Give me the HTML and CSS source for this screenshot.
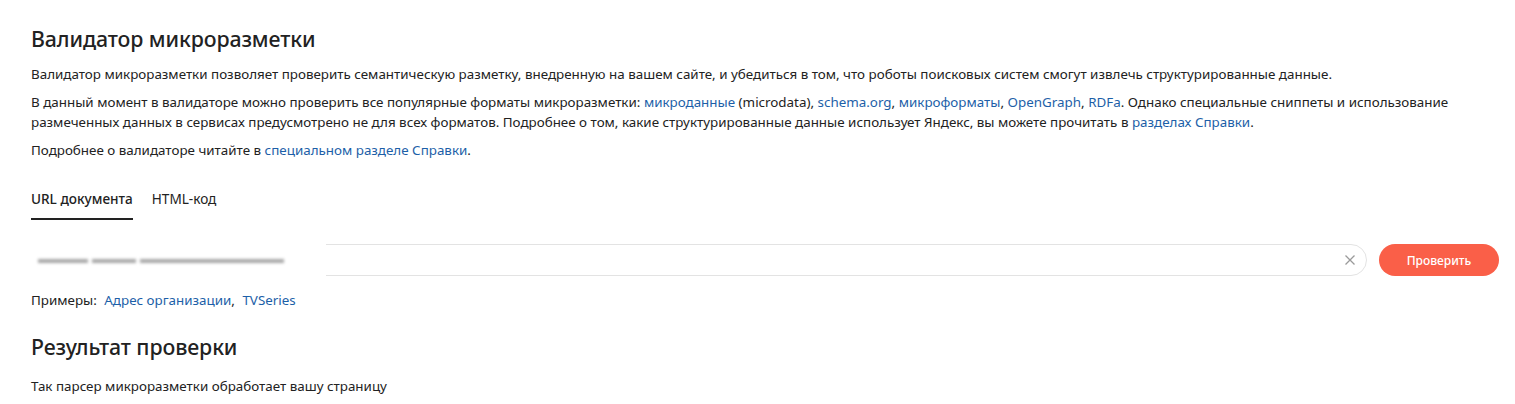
FILE: index.html
```html
<!DOCTYPE html>
<html lang="ru">
<head>
<meta charset="utf-8">
<link rel="stylesheet" href="styles.css">
</head>
<body>
<main class="page">
  <h1 class="title">Валидатор микроразметки</h1>
  <p class="text">Валидатор микроразметки позволяет проверить семантическую разметку, внедренную на вашем сайте, и убедиться в том, что роботы поисковых систем смогут извлечь структурированные данные.</p>
  <p class="text">В данный момент в валидаторе можно проверить все популярные форматы микроразметки: <a href="#">микроданные</a> (microdata), <a href="#">schema.org</a>, <a href="#">микроформаты</a>, <a href="#">OpenGraph</a>, <a href="#">RDFa</a>. Однако специальные сниппеты и использование<br>размеченных данных в сервисах предусмотрено не для всех форматов. Подробнее о том, какие структурированные данные использует Яндекс, вы можете прочитать в <a href="#">разделах Справки</a>.</p>
  <p class="text">Подробнее о валидаторе читайте в <a href="#">специальном разделе Справки</a>.</p>

  <nav class="tabs">
    <span class="tab tab-active">URL документа</span>
    <span class="tab">HTML-код</span>
  </nav>

  <div class="form">
    <div class="input">
      <span class="blurred"><span class="blur-line"></span><span class="blur-line blur-line-2"></span><span class="blur-line blur-line-3"></span></span>
      <span class="clear">
        <svg width="12" height="12" viewBox="0 0 12 12"><path d="M1.5 1.5 L10.5 10.5 M10.5 1.5 L1.5 10.5" stroke="#9a9a9a" stroke-width="1.3" fill="none"/></svg>
      </span>
    </div>
    <button class="btn">Проверить</button>
  </div>

  <div class="examples">
    <span class="ex-label">Примеры:</span>
    <a href="#" class="ex-link">Адрес организации</a><span class="ex-sep">,</span>
    <a href="#" class="ex-link">TVSeries</a>
  </div>

  <h2 class="title title-2">Результат проверки</h2>
  <p class="text">Так парсер микроразметки обработает вашу страницу</p>
</main>
</body>
</html>
```
FILE: styles.css
```css
* { box-sizing: border-box; }
html, body { margin: 0; background: #fff; }
body {
  font-family: "Noto Sans", "Open Sans", sans-serif;
  color: #222;
  font-size: 13.4px;
}
.page {
  padding: 24px 16px 0 31px;
}
.title {
  margin: 0 0 10px;
  font-size: 21.3px;
  font-weight: 500;
  line-height: 30px;
  letter-spacing: -0.1px;
}
.title-2 { margin-top: 22px; margin-bottom: 14px; }
.text {
  margin: 0 0 8px;
  line-height: 20px;
}
a { color: #1d5fa8; text-decoration: none; }
.tabs {
  display: flex;
  gap: 19px;
  margin-top: 26px;
  font-size: 13.6px;
}
.tab {
  padding: 4px 0 10px;
  line-height: 18px;
}
.tab-active {
  font-weight: 500;
  border-bottom: 2px solid #222;
}
.form {
  display: flex;
  align-items: center;
  gap: 12px;
  margin-top: 24px;
}
.input {
  position: relative;
  flex: 1;
  height: 32px;
  border: 1px solid #e3e3e3;
  border-radius: 16px;
}
.blurred {
  position: absolute;
  left: -6px;
  top: -3px;
  width: 300px;
  height: 38px;
  background: #fff;
  display: flex;
  align-items: center;
  gap: 4px;
  padding-left: 12px;
}
.blur-line {
  width: 50px;
  height: 4px;
  background: #a8a8a8;
  filter: blur(1.6px);
}
.blur-line-2 { width: 44px; }
.blur-line-3 { width: 144px; }
.clear {
  position: absolute;
  right: 10px;
  top: 9px;
  width: 12px;
  height: 12px;
  display: block;
}
.clear svg { display: block; }
.btn {
  width: 120px;
  height: 32px;
  border: 0;
  border-radius: 16px;
  background: #fa5f48;
  color: #fff;
  font-family: inherit;
  font-size: 12px;
  font-weight: 500;
}
.examples {
  margin-top: 14px;
  line-height: 20px;
}
.ex-label { margin-right: 4px; }
.ex-sep { margin-right: 4px; }
```
